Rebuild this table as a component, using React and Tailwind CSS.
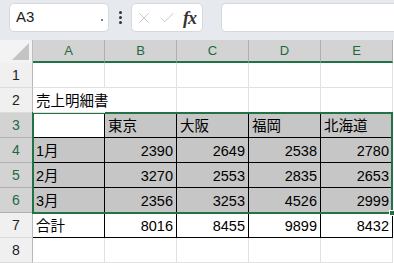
import { X, Check } from 'lucide-react';

const COLS = ['A', 'B', 'C', 'D', 'E'];

// sheet contents, row by row (A..E)
const ROWS = [
  ['', '', '', '', ''],
  ['売上明細書', '', '', '', ''],
  ['', '東京', '大阪', '福岡', '北海道'],
  ['1月', 2390, 2649, 2538, 2780],
  ['2月', 3270, 2553, 2835, 2653],
  ['3月', 2356, 3253, 4526, 2999],
  ['合計', 8016, 8455, 9899, 8432],
  ['', '', '', '', ''],
];

const FONT = "font-['Liberation_Sans','Noto_Sans_CJK_JP',sans-serif]";

const inTable = (r, c) => (r === 3 && c >= 1) || (r >= 4 && r <= 7);
const selected = (r, c) => r >= 3 && r <= 6 && !(r === 3 && c === 0);

function Cell({ r, c, value }) {
  const table = inTable(r, c) || (r === 3 && c === 0);
  const fill = selected(r, c) ? 'bg-[#c6c6c6]' : 'bg-white';
  const border = table ? 'border-black' : 'border-[#e1e1e1]';
  // the title spills over into B2, so A2 has no right gridline
  const spill = r === 2 && c === 0 ? 'border-r-transparent relative z-10' : '';
  const num = typeof value === 'number';
  return (
    <div
      className={`box-border w-[72px] h-[25px] border-r border-b ${border} ${fill} ${spill} flex items-end pb-[1px] px-[3px] text-[14.5px] leading-[20px] text-black whitespace-nowrap ${
        num ? 'justify-end' : 'justify-start'
      }`}
    >
      {value}
    </div>
  );
}

function FormulaBar() {
  return (
    <div className="h-[40px] bg-[#e6e9ed] flex items-start pt-[3px] pl-[9px] gap-0">
      <div className="box-border w-[100px] h-[29px] bg-white border border-[#d6d8db] rounded-[5px] flex items-center justify-between pl-[6px] pr-[5px]">
        <span className="text-[15px] text-[#222]">A3</span>
        <span className="w-[2px] h-[2px] bg-[#555] rounded-full mt-[4px]" />
      </div>
      <div className="w-[22px] h-[29px] flex flex-col items-center justify-center gap-[2px]">
        <span className="w-[3px] h-[3px] bg-[#333] rounded-full" />
        <span className="w-[3px] h-[3px] bg-[#333] rounded-full" />
        <span className="w-[3px] h-[3px] bg-[#333] rounded-full" />
      </div>
      <div className="box-border w-[72px] h-[29px] bg-white border border-[#d6d8db] rounded-[5px] flex items-center pl-[3px] gap-[5px]">
        <X size={18} strokeWidth={1} className="text-[#b8b8b8]" />
        <Check size={18} strokeWidth={1} className="text-[#b8b8b8]" />
        <span className="font-['Liberation_Serif',serif] italic font-bold text-[18px] text-[#333] leading-none ml-[2px] tracking-[-1px]">
          fx
        </span>
      </div>
      <div className="box-border ml-[18px] flex-1 h-[29px] bg-white border border-[#d6d8db] rounded-l-[5px] border-r-0" />
    </div>
  );
}

export default function App() {
  return (
    <div className={`w-[394px] h-[263px] overflow-hidden bg-white ${FONT}`}>
      <FormulaBar />
      <div className="relative">
        {/* column headers */}
        <div className="flex h-[23px]">
          <div className="box-border w-[33px] h-[23px] bg-[#f3f3f3] border-r border-[#bdbdbd] relative">
            <div className="absolute right-[3px] bottom-[3px] w-0 h-0 border-l-[17px] border-l-transparent border-b-[17px] border-b-[#c4c4c4]" />
          </div>
          {COLS.map((c) => (
            <div
              key={c}
              className="box-border w-[72px] h-[23px] bg-[#d3d3d3] border-r border-[#aeaeae] border-b-2 border-b-[#217346] flex items-center justify-center text-[13px] text-[#1d6a42]"
            >
              {c}
            </div>
          ))}
        </div>

        {ROWS.map((row, i) => {
          const r = i + 1;
          const hl = r >= 3 && r <= 6;
          return (
            <div key={r} className="flex">
              <div
                className={`box-border w-[33px] h-[25px] border-r border-b border-r-[#b8b8b8] flex items-center justify-center text-[14px] ${
                  hl
                    ? 'bg-[#d3d3d3] border-b-[#b0b0b0] text-[#1d6a42]'
                    : 'bg-[#f0f0f0] border-b-[#dcdcdc] text-[#222]'
                }`}
              >
                {r}
              </div>
              {row.map((v, c) => (
                <Cell key={c} r={r} c={c} value={v} />
              ))}
            </div>
          );
        })}

        {/* selection range A3:E6 */}
        <div className="absolute left-[32px] top-[72px] w-[361px] h-[102px] border-2 border-[#217346] pointer-events-none">
          <div className="absolute -right-[4px] -bottom-[4px] w-[6px] h-[6px] bg-[#217346] border border-white" />
        </div>
      </div>
    </div>
  );
}
